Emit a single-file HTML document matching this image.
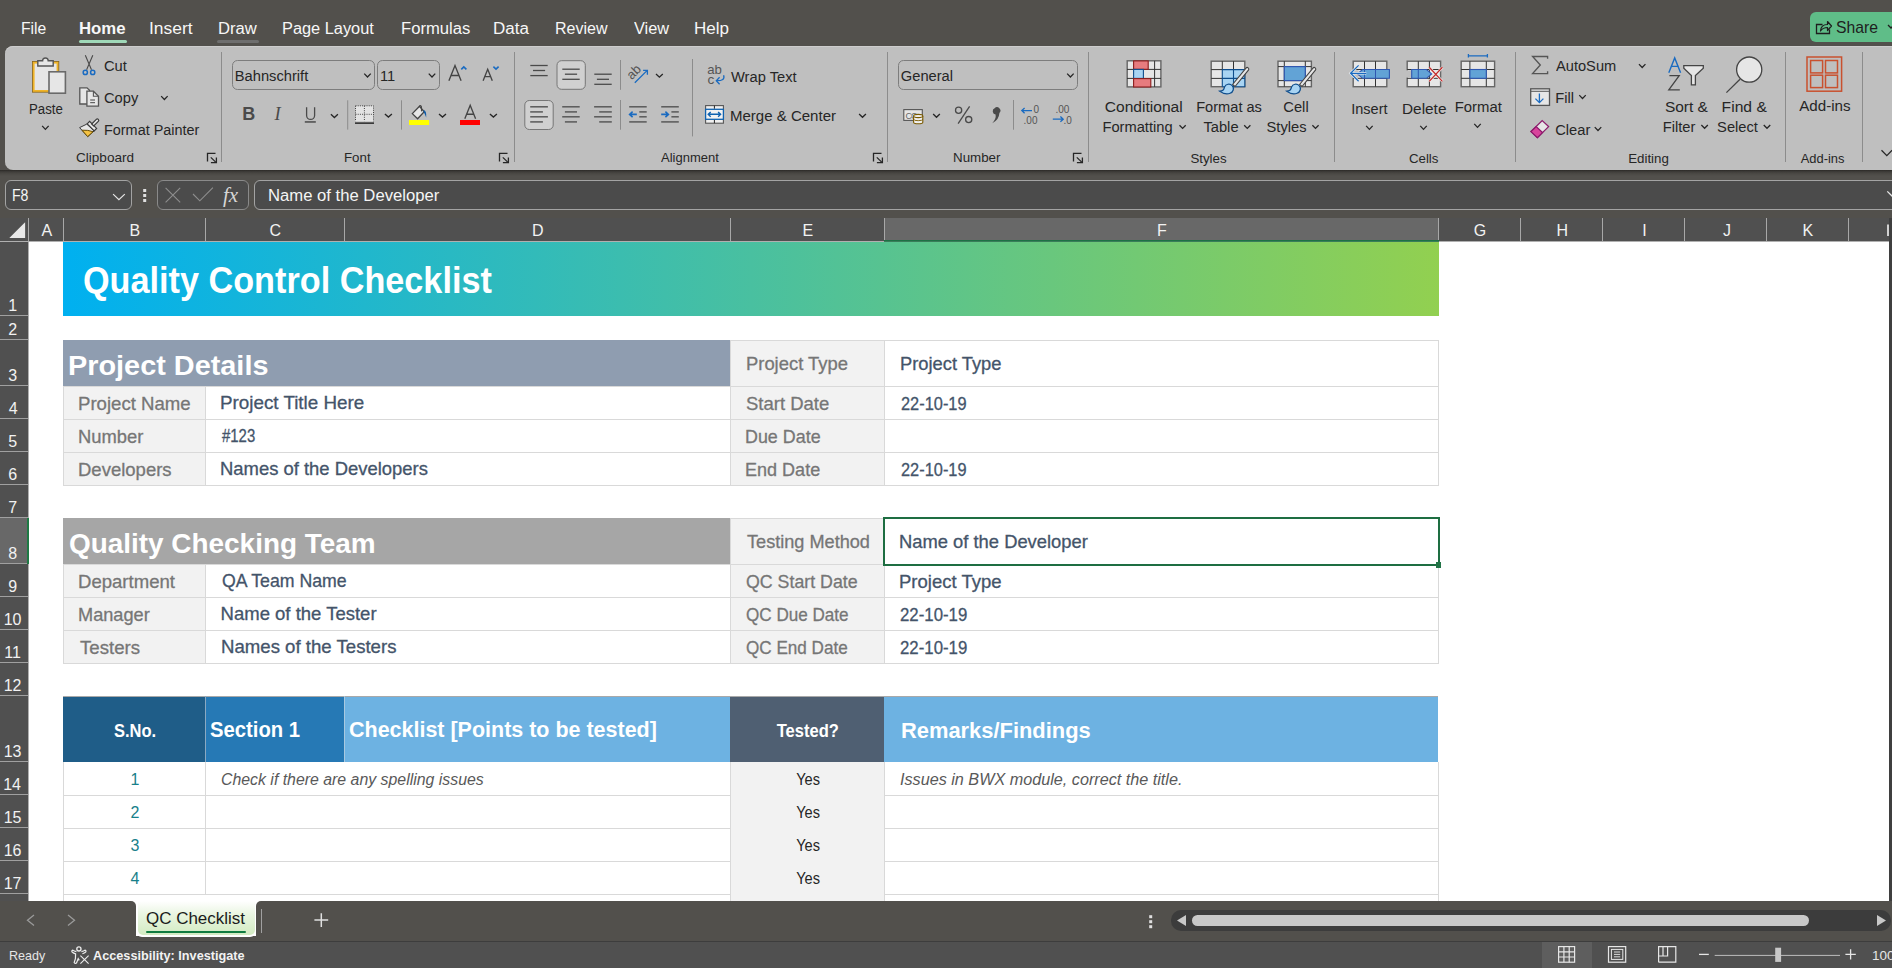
<!DOCTYPE html><html><head><meta charset="utf-8"><style>
html,body{margin:0;padding:0}
body{width:1892px;height:968px;position:relative;overflow:hidden;background:#52504c;font-family:'Liberation Sans',sans-serif}
</style></head><body>
<div style="position:absolute;left:0px;top:0px;width:1892px;height:46px;background:#52504c;"></div>
<div style="position:absolute;left:79px;top:40px;width:48px;height:3px;background:#9fd8b8;border-radius:2px;"></div>
<div style="position:absolute;left:217px;top:40px;width:42px;height:3px;background:#6e6e6e;border-radius:2px;"></div>
<div style="position:absolute;left:1810px;top:12px;width:100px;height:30px;background:#5fbd88;border-radius:6px;"></div>
<div style="position:absolute;left:5px;top:46px;width:1900px;height:124px;background:#bfbfbf;border-radius:8px;box-shadow:inset 0 1px 0 #cdcdcd;"></div>
<div style="position:absolute;left:221px;top:52px;width:1px;height:110px;background:#8c8c8c;"></div>
<div style="position:absolute;left:513.5px;top:52px;width:1px;height:110px;background:#8c8c8c;"></div>
<div style="position:absolute;left:886.5px;top:52px;width:1px;height:110px;background:#8c8c8c;"></div>
<div style="position:absolute;left:1087.5px;top:52px;width:1px;height:110px;background:#8c8c8c;"></div>
<div style="position:absolute;left:1333.5px;top:52px;width:1px;height:110px;background:#8c8c8c;"></div>
<div style="position:absolute;left:1514.5px;top:52px;width:1px;height:110px;background:#8c8c8c;"></div>
<div style="position:absolute;left:1784.5px;top:52px;width:1px;height:110px;background:#8c8c8c;"></div>
<div style="position:absolute;left:1862px;top:52px;width:1px;height:110px;background:#8c8c8c;"></div>
<div style="position:absolute;left:0px;top:170px;width:1892px;height:48px;background:#52504c;"></div>
<div style="position:absolute;left:0px;top:170px;width:1892px;height:6px;background:linear-gradient(180deg,#2b2926 0%,#3f3d3a 30%,#4a4844 60%,#52504c 100%);"></div>
<div style="position:absolute;left:5px;top:180px;width:125px;height:28px;border:1px solid #a3a3a3;border-radius:6px;background:#4b4b4b"></div>
<div style="position:absolute;left:157px;top:180px;width:90px;height:28px;border:1px solid #8a8a8a;border-radius:6px;background:#4b4b4b"></div>
<div style="position:absolute;left:254px;top:180px;width:1700px;height:28px;border:1px solid #a3a3a3;border-radius:6px;background:#4b4b4b"></div>
<div style="position:absolute;left:0px;top:218px;width:1892px;height:23px;background:#505050;"></div>
<div style="position:absolute;left:0px;top:241px;width:28px;height:660px;background:#505050;"></div>
<div style="position:absolute;left:884px;top:218px;width:554px;height:23px;background:#686868;"></div>
<div style="position:absolute;left:28px;top:218px;width:1px;height:23px;background:#a8a8a8;"></div>
<div style="position:absolute;left:63px;top:218px;width:1px;height:23px;background:#a8a8a8;"></div>
<div style="position:absolute;left:205px;top:218px;width:1px;height:23px;background:#a8a8a8;"></div>
<div style="position:absolute;left:344px;top:218px;width:1px;height:23px;background:#a8a8a8;"></div>
<div style="position:absolute;left:730px;top:218px;width:1px;height:23px;background:#a8a8a8;"></div>
<div style="position:absolute;left:884px;top:218px;width:1px;height:23px;background:#a8a8a8;"></div>
<div style="position:absolute;left:1438px;top:218px;width:1px;height:23px;background:#a8a8a8;"></div>
<div style="position:absolute;left:1520px;top:218px;width:1px;height:23px;background:#a8a8a8;"></div>
<div style="position:absolute;left:1602px;top:218px;width:1px;height:23px;background:#a8a8a8;"></div>
<div style="position:absolute;left:1684px;top:218px;width:1px;height:23px;background:#a8a8a8;"></div>
<div style="position:absolute;left:1766px;top:218px;width:1px;height:23px;background:#a8a8a8;"></div>
<div style="position:absolute;left:1848px;top:218px;width:1px;height:23px;background:#a8a8a8;"></div>
<div style="position:absolute;left:0px;top:241px;width:1889px;height:1px;background:#b0b0b0;"></div>
<div style="position:absolute;left:0px;top:518px;width:28px;height:46px;background:#686868;"></div>
<div style="position:absolute;left:0px;top:315px;width:28px;height:1px;background:#a0a0a0;"></div>
<div style="position:absolute;left:0px;top:339px;width:28px;height:1px;background:#a0a0a0;"></div>
<div style="position:absolute;left:0px;top:385px;width:28px;height:1px;background:#a0a0a0;"></div>
<div style="position:absolute;left:0px;top:418px;width:28px;height:1px;background:#a0a0a0;"></div>
<div style="position:absolute;left:0px;top:451px;width:28px;height:1px;background:#a0a0a0;"></div>
<div style="position:absolute;left:0px;top:484px;width:28px;height:1px;background:#a0a0a0;"></div>
<div style="position:absolute;left:0px;top:517px;width:28px;height:1px;background:#a0a0a0;"></div>
<div style="position:absolute;left:0px;top:563px;width:28px;height:1px;background:#a0a0a0;"></div>
<div style="position:absolute;left:0px;top:596px;width:28px;height:1px;background:#a0a0a0;"></div>
<div style="position:absolute;left:0px;top:629px;width:28px;height:1px;background:#a0a0a0;"></div>
<div style="position:absolute;left:0px;top:662px;width:28px;height:1px;background:#a0a0a0;"></div>
<div style="position:absolute;left:0px;top:695px;width:28px;height:1px;background:#a0a0a0;"></div>
<div style="position:absolute;left:0px;top:761px;width:28px;height:1px;background:#a0a0a0;"></div>
<div style="position:absolute;left:0px;top:794px;width:28px;height:1px;background:#a0a0a0;"></div>
<div style="position:absolute;left:0px;top:827px;width:28px;height:1px;background:#a0a0a0;"></div>
<div style="position:absolute;left:0px;top:860px;width:28px;height:1px;background:#a0a0a0;"></div>
<div style="position:absolute;left:0px;top:893px;width:28px;height:1px;background:#a0a0a0;"></div>
<div style="position:absolute;left:28px;top:242px;width:1px;height:659px;background:#b0b0b0;"></div>
<div style="position:absolute;left:27px;top:518px;width:2px;height:46px;background:#1f7a45;"></div>
<div style="position:absolute;left:29px;top:242px;width:1860px;height:659px;background:#ffffff;"></div>
<div style="position:absolute;left:1889px;top:218px;width:3px;height:683px;background:#3f3f3f;"></div>
<div style="position:absolute;left:63px;top:242px;width:1376px;height:74px;background:linear-gradient(90deg,#00b0f0 0%,#92d050 100%);"></div>
<div style="position:absolute;left:63px;top:340px;width:667px;height:46px;background:#8f9db0;"></div>
<div style="position:absolute;left:730px;top:340px;width:154px;height:46px;background:#f2f2f2;"></div>
<div style="position:absolute;left:63px;top:386px;width:142px;height:33px;background:#f2f2f2;"></div>
<div style="position:absolute;left:730px;top:386px;width:154px;height:33px;background:#f2f2f2;"></div>
<div style="position:absolute;left:63px;top:419px;width:142px;height:33px;background:#f2f2f2;"></div>
<div style="position:absolute;left:730px;top:419px;width:154px;height:33px;background:#f2f2f2;"></div>
<div style="position:absolute;left:63px;top:452px;width:142px;height:33px;background:#f2f2f2;"></div>
<div style="position:absolute;left:730px;top:452px;width:154px;height:33px;background:#f2f2f2;"></div>
<div style="position:absolute;left:730px;top:340px;width:708px;height:1px;background:#d9d9d9;"></div>
<div style="position:absolute;left:63px;top:386px;width:1375px;height:1px;background:#d9d9d9;"></div>
<div style="position:absolute;left:63px;top:419px;width:1375px;height:1px;background:#d9d9d9;"></div>
<div style="position:absolute;left:63px;top:452px;width:1375px;height:1px;background:#d9d9d9;"></div>
<div style="position:absolute;left:63px;top:485px;width:1375px;height:1px;background:#d9d9d9;"></div>
<div style="position:absolute;left:63px;top:386px;width:1375px;height:1px;background:#d9d9d9;"></div>
<div style="position:absolute;left:63px;top:386px;width:1px;height:99px;background:#d9d9d9;"></div>
<div style="position:absolute;left:205px;top:386px;width:1px;height:99px;background:#d9d9d9;"></div>
<div style="position:absolute;left:730px;top:340px;width:1px;height:145px;background:#d9d9d9;"></div>
<div style="position:absolute;left:884px;top:340px;width:1px;height:145px;background:#d9d9d9;"></div>
<div style="position:absolute;left:1438px;top:340px;width:1px;height:146px;background:#d9d9d9;"></div>
<div style="position:absolute;left:63px;top:518px;width:667px;height:46px;background:#a6a6a6;"></div>
<div style="position:absolute;left:730px;top:518px;width:154px;height:46px;background:#f2f2f2;"></div>
<div style="position:absolute;left:63px;top:564px;width:142px;height:33px;background:#f2f2f2;"></div>
<div style="position:absolute;left:730px;top:564px;width:154px;height:33px;background:#f2f2f2;"></div>
<div style="position:absolute;left:63px;top:597px;width:142px;height:33px;background:#f2f2f2;"></div>
<div style="position:absolute;left:730px;top:597px;width:154px;height:33px;background:#f2f2f2;"></div>
<div style="position:absolute;left:63px;top:630px;width:142px;height:33px;background:#f2f2f2;"></div>
<div style="position:absolute;left:730px;top:630px;width:154px;height:33px;background:#f2f2f2;"></div>
<div style="position:absolute;left:730px;top:518px;width:708px;height:1px;background:#d9d9d9;"></div>
<div style="position:absolute;left:63px;top:564px;width:1375px;height:1px;background:#d9d9d9;"></div>
<div style="position:absolute;left:63px;top:597px;width:1375px;height:1px;background:#d9d9d9;"></div>
<div style="position:absolute;left:63px;top:630px;width:1375px;height:1px;background:#d9d9d9;"></div>
<div style="position:absolute;left:63px;top:663px;width:1375px;height:1px;background:#d9d9d9;"></div>
<div style="position:absolute;left:63px;top:564px;width:1375px;height:1px;background:#d9d9d9;"></div>
<div style="position:absolute;left:63px;top:564px;width:1px;height:99px;background:#d9d9d9;"></div>
<div style="position:absolute;left:205px;top:564px;width:1px;height:99px;background:#d9d9d9;"></div>
<div style="position:absolute;left:730px;top:518px;width:1px;height:145px;background:#d9d9d9;"></div>
<div style="position:absolute;left:884px;top:518px;width:1px;height:145px;background:#d9d9d9;"></div>
<div style="position:absolute;left:1438px;top:518px;width:1px;height:146px;background:#d9d9d9;"></div>
<div style="position:absolute;left:883px;top:517px;width:553px;height:45px;border:2px solid #1e6e42"></div>
<div style="position:absolute;left:1435.5px;top:562px;width:5.5px;height:5.5px;background:#217346;"></div>
<div style="position:absolute;left:63px;top:696px;width:142px;height:66px;background:#1f5d88;"></div>
<div style="position:absolute;left:205px;top:696px;width:139px;height:66px;background:#2679b5;"></div>
<div style="position:absolute;left:344px;top:696px;width:386px;height:66px;background:#6db2e2;"></div>
<div style="position:absolute;left:730px;top:696px;width:154px;height:66px;background:#4f5f72;"></div>
<div style="position:absolute;left:884px;top:696px;width:554px;height:66px;background:#6db2e2;"></div>
<div style="position:absolute;left:63px;top:696px;width:1375px;height:1px;background:#a9a9a9;"></div>
<div style="position:absolute;left:344px;top:696px;width:1px;height:66px;background:#a8c9e0;"></div>
<div style="position:absolute;left:205px;top:696px;width:1px;height:66px;background:#8aa9c2;"></div>
<div style="position:absolute;left:730px;top:762px;width:154px;height:33px;background:#f2f2f2;"></div>
<div style="position:absolute;left:63px;top:795px;width:1375px;height:1px;background:#d9d9d9;"></div>
<div style="position:absolute;left:730px;top:795px;width:154px;height:33px;background:#f2f2f2;"></div>
<div style="position:absolute;left:63px;top:828px;width:1375px;height:1px;background:#d9d9d9;"></div>
<div style="position:absolute;left:730px;top:828px;width:154px;height:33px;background:#f2f2f2;"></div>
<div style="position:absolute;left:63px;top:861px;width:1375px;height:1px;background:#d9d9d9;"></div>
<div style="position:absolute;left:730px;top:861px;width:154px;height:33px;background:#f2f2f2;"></div>
<div style="position:absolute;left:63px;top:894px;width:1375px;height:1px;background:#d9d9d9;"></div>
<div style="position:absolute;left:730px;top:894px;width:154px;height:33px;background:#f2f2f2;"></div>
<div style="position:absolute;left:63px;top:927px;width:1375px;height:1px;background:#d9d9d9;"></div>
<div style="position:absolute;left:63px;top:762px;width:1px;height:139px;background:#d9d9d9;"></div>
<div style="position:absolute;left:205px;top:762px;width:1px;height:139px;background:#d9d9d9;"></div>
<div style="position:absolute;left:730px;top:762px;width:1px;height:139px;background:#d9d9d9;"></div>
<div style="position:absolute;left:884px;top:762px;width:1px;height:139px;background:#d9d9d9;"></div>
<div style="position:absolute;left:1438px;top:762px;width:1px;height:139px;background:#d9d9d9;"></div>
<div style="position:absolute;left:0px;top:901px;width:1892px;height:40px;background:#ffffff;"></div>
<div style="position:absolute;left:0px;top:901px;width:136px;height:40px;background:#52504c;border-radius:0 5px 0 0;"></div>
<div style="position:absolute;left:256px;top:901px;width:1636px;height:40px;background:#52504c;border-radius:5px 0 0 0;"></div>
<div style="position:absolute;left:136px;top:936px;width:120px;height:5px;background:#52504c;"></div>
<div style="position:absolute;left:136px;top:895px;width:120px;height:42px;background:#ffffff;border-radius:0 0 6px 6px;"></div>
<div style="position:absolute;left:137.5px;top:901px;width:117px;height:34.3px;background:linear-gradient(180deg,#ffffff 0%,#e9f5e1 40%,#d3ebc2 100%);border-radius:0 0 5px 5px;"></div>
<div style="position:absolute;left:146px;top:931px;width:100px;height:2px;background:#107c41;border-radius:1px;"></div>
<div style="position:absolute;left:261px;top:909px;width:1px;height:24px;background:#a0a0a0;"></div>
<div style="position:absolute;left:0px;top:941px;width:1892px;height:27px;background:#505050;"></div>
<div style="position:absolute;left:0px;top:941px;width:1892px;height:1px;background:#3d3d3d;"></div>
<div style="position:absolute;left:1542px;top:942px;width:50px;height:26px;background:#5e5e5e;"></div>
<div style="position:absolute;left:1171px;top:910px;width:720px;height:21px;background:#3c3c3c;border-radius:10px;"></div>
<div style="position:absolute;left:1192px;top:915px;width:617px;height:11px;background:#c8c8c8;border-radius:6px;"></div>
<svg style="position:absolute;left:0;top:0" width="1892" height="968" viewBox="0 0 1892 968"><rect x="33.6" y="62.6" width="24" height="28.4" fill="#e6e6e6" stroke="#f0b429" stroke-width="2"/>
<rect x="32.4" y="61.4" width="26.4" height="30.8" fill="none" stroke="#8a6414" stroke-width="0.8"/>
<path d="M37.8 66 V60.8 H42.6 A2.8 2.8 0 0 1 48.2 60.8 H53.2 V66 Z" fill="#e6e6e6" stroke="#555" stroke-width="1.4"/>
<rect x="49" y="71.8" width="16.4" height="21.4" fill="#e6e6e6" stroke="#6a6a6a" stroke-width="1.6"/>
<path d="M42.15 125.85 L45.4 129.35 L48.65 125.85" fill="none" stroke="#262626" stroke-width="1.3"/>
<path d="M85.3 55.3 L91.5 69.8 M92.8 55.3 L86.6 69.8" stroke="#4a4a4a" stroke-width="1.1" fill="none"/>
<circle cx="85.3" cy="72.4" r="2.1" fill="none" stroke="#1a6bc1" stroke-width="1.5"/>
<circle cx="92.7" cy="72.4" r="2.1" fill="none" stroke="#1a6bc1" stroke-width="1.5"/>
<path d="M79.8 87.8 H87 L89.5 90.3 V104 H79.8 Z" fill="#e6e6e6" stroke="#555" stroke-width="1.3"/>
<path d="M86.9 91.2 H93.4 L98.5 96.3 V106.2 H86.9 Z" fill="#e6e6e6" stroke="#555" stroke-width="1.3"/>
<path d="M93.4 91.2 V96.3 H98.5" fill="none" stroke="#555" stroke-width="1.1"/>
<path d="M90.2 100 H95 M90.2 102.7 H95" stroke="#333" stroke-width="0.9"/>
<path d="M86.8 124.1 L79.6 127.6 L87.7 136.6 L94.2 130.9 Z" fill="#e6e6e6" stroke="#3a3a3a" stroke-width="1"/>
<path d="M82 130.2 L87.7 136.6 L93 131.7 Q88 129.8 82 130.2 Z" fill="#f5c242" stroke="#6b4e00" stroke-width="1"/>
<path d="M87.2 123.8 L89.6 121.4 L96.6 128.4 L94.2 130.8 Z" fill="#e6e6e6" stroke="#3a3a3a" stroke-width="1.2"/>
<path d="M91.7 124 L96.3 119.4 A1.4 1.4 0 0 1 98.3 121.4 L93.7 126 Z" fill="#e6e6e6" stroke="#3a3a3a" stroke-width="1.2"/>
<rect x="232.5" y="60.5" width="142" height="29" rx="5" fill="none" stroke="#7d7d7d" stroke-width="1"/>
<path d="M364.25 73.6 L367.5 77.0 L370.75 73.6" fill="none" stroke="#262626" stroke-width="1.3"/>
<rect x="377.5" y="60.5" width="62" height="29" rx="5" fill="none" stroke="#7d7d7d" stroke-width="1"/>
<path d="M428.75 73.6 L432 77.0 L435.25 73.6" fill="none" stroke="#262626" stroke-width="1.3"/>
<path d="M448.9 80.8 L455 65.6 L461.1 80.8 M450.9 75.5 H459" fill="none" stroke="#444444" stroke-width="1.35"/>
<path d="M461.3 69.4 L463.8 66.9 L466.4 69.4" fill="none" stroke="#1a6bc1" stroke-width="1.6"/>
<path d="M483.1 80.8 L487.7 69.3 L492.3 80.8 M484.6 76.6 H490.8" fill="none" stroke="#444444" stroke-width="1.35"/>
<path d="M493.4 66.7 L496 69.2 L498.6 66.7" fill="none" stroke="#1a6bc1" stroke-width="1.6"/>
<text x="242.3" y="120.2" font-family="Liberation Sans" font-weight="700" font-size="18" fill="#4a4a4a">B</text>
<text x="274.5" y="120.2" font-family="Liberation Serif" font-style="italic" font-size="18.5" fill="#4a4a4a">I</text>
<path d="M306.6 107.3 V115.4 A4 4 0 0 0 314.6 115.4 V107.3" fill="none" stroke="#4a4a4a" stroke-width="1.3"/>
<rect x="304.8" y="121.2" width="11" height="1.5" fill="#4a4a4a"/>
<path d="M330.9 114.25 L334.4 117.55000000000001 L337.9 114.25" fill="none" stroke="#262626" stroke-width="1.3"/>
<rect x="347.2" y="100.3" width="1" height="29.3" fill="#8c8c8c"/>
<rect x="355.5" y="105.8" width="18" height="15.5" fill="#e3e3e3"/>
<path d="M355.5 105.8 H373.5 V121.3 M355.5 105.8 V121.3 M364.4 105.8 V121.3 M355.5 114.3 H373.5" fill="none" stroke="#333" stroke-width="0.9" stroke-dasharray="1 1.2"/>
<rect x="355" y="122.3" width="19" height="1.7" fill="#3a3a3a"/>
<path d="M384.9 113.9 L388.4 117.1 L391.9 113.9" fill="none" stroke="#262626" stroke-width="1.3"/>
<rect x="401" y="100.3" width="1" height="29.3" fill="#8c8c8c"/>
<path d="M412.3 113.6 L419.5 106.3 L424.2 111.7 L417.6 118.8 Z" fill="#e6e6e6" stroke="#444444" stroke-width="1.3"/>
<path d="M419.3 106.6 Q420.2 104.5 421.3 106.5 L421.6 111.4" fill="none" stroke="#444444" stroke-width="1.2"/>
<path d="M423.6 110 Q426.8 110.6 426.2 117.6 Q424.8 113.5 423.6 112 Z" fill="#0e5ba8"/>
<rect x="409" y="120" width="20.1" height="5" fill="#ffff00"/>
<path d="M439.0 113.9 L442.5 117.1 L446.0 113.9" fill="none" stroke="#262626" stroke-width="1.3"/>
<path d="M464.8 118.7 L470.2 105.3 L475.6 118.7 M466.7 114.2 H473.7" fill="none" stroke="#444444" stroke-width="1.35"/>
<rect x="460" y="120" width="20" height="5" fill="#ff0000"/>
<path d="M489.9 113.9 L493.4 117.1 L496.9 113.9" fill="none" stroke="#262626" stroke-width="1.3"/>
<path d="M207.5 161.4 V153.4 H215.5" fill="none" stroke="#262626" stroke-width="1.3"/>
<path d="M210.8 157.4 L216.0 162.4" fill="none" stroke="#262626" stroke-width="1.3"/>
<path d="M216.4 157.4 V162.6 H210.9" fill="none" stroke="#262626" stroke-width="1.3"/>
<path d="M499.5 161.4 V153.4 H507.5" fill="none" stroke="#262626" stroke-width="1.3"/>
<path d="M502.8 157.4 L508.0 162.4" fill="none" stroke="#262626" stroke-width="1.3"/>
<path d="M508.4 157.4 V162.6 H502.9" fill="none" stroke="#262626" stroke-width="1.3"/>
<path d="M873.5 161.4 V153.4 H881.5" fill="none" stroke="#262626" stroke-width="1.3"/>
<path d="M876.8 157.4 L882.0 162.4" fill="none" stroke="#262626" stroke-width="1.3"/>
<path d="M882.4 157.4 V162.6 H876.9" fill="none" stroke="#262626" stroke-width="1.3"/>
<path d="M1073.5 161.4 V153.4 H1081.5" fill="none" stroke="#262626" stroke-width="1.3"/>
<path d="M1076.8 157.4 L1082.0 162.4" fill="none" stroke="#262626" stroke-width="1.3"/>
<path d="M1082.4 157.4 V162.6 H1076.9" fill="none" stroke="#262626" stroke-width="1.3"/>
<path d="M530.3 65.5 H547.7" stroke="#4a4a4a" stroke-width="1.3"/>
<path d="M530.3 75.6 H547.7" stroke="#4a4a4a" stroke-width="1.3"/>
<path d="M533 70.5 H545.1" stroke="#4a4a4a" stroke-width="1.3"/>
<rect x="557" y="60.7" width="28.3" height="28.6" rx="4.5" fill="#d0d0d0" stroke="#767676" stroke-width="1"/>
<path d="M562.3 69.2 H579.7" stroke="#4a4a4a" stroke-width="1.3"/>
<path d="M562.3 79.3 H579.7" stroke="#4a4a4a" stroke-width="1.3"/>
<path d="M564.9 74.2 H577.1" stroke="#4a4a4a" stroke-width="1.3"/>
<path d="M594.3 74.2 H611.7" stroke="#4a4a4a" stroke-width="1.3"/>
<path d="M594.3 84.3 H611.7" stroke="#4a4a4a" stroke-width="1.3"/>
<path d="M596.9 79.3 H609" stroke="#4a4a4a" stroke-width="1.3"/>
<rect x="620" y="60" width="1" height="29.8" fill="#8c8c8c"/>
<g transform="translate(634 72) rotate(-45)"><text x="-7.4" y="4.2" font-family="Liberation Sans" font-size="13" fill="#555">ab</text></g>
<path d="M634.8 82.8 L647 70.6 M643.1 70.4 H647.4 V74.7" fill="none" stroke="#1a6bc1" stroke-width="1.3"/>
<path d="M656.0 74.0 L659.4 77.19999999999999 L662.8 74.0" fill="none" stroke="#262626" stroke-width="1.3"/>
<text x="707.2" y="74.3" font-family="Liberation Sans" font-size="13.2" fill="#555">ab</text>
<text x="707.4" y="83.6" font-family="Liberation Sans" font-size="13.6" fill="#555">c</text>
<path d="M723.6 75.3 Q725.6 80.8 716.5 80.7 M719.6 77.2 L716.3 80.7 L719.6 84.2" fill="none" stroke="#1a6bc1" stroke-width="1.3"/>
<rect x="524.8" y="100.5" width="28.4" height="29" rx="4.5" fill="#d0d0d0" stroke="#767676" stroke-width="1"/>
<path d="M530.2 106.8 H547.9" stroke="#595959" stroke-width="1.5"/>
<path d="M530.2 116.8 H547.9" stroke="#595959" stroke-width="1.5"/>
<path d="M530.2 111.9 H542.9" stroke="#595959" stroke-width="1.5"/>
<path d="M530.2 121.9 H542.9" stroke="#595959" stroke-width="1.5"/>
<path d="M562.2 106.8 H579.7" stroke="#595959" stroke-width="1.5"/>
<path d="M562.2 116.8 H579.7" stroke="#595959" stroke-width="1.5"/>
<path d="M564.9 111.9 H577" stroke="#595959" stroke-width="1.5"/>
<path d="M564.9 121.9 H577" stroke="#595959" stroke-width="1.5"/>
<path d="M594.1 106.8 H611.8" stroke="#595959" stroke-width="1.5"/>
<path d="M594.1 116.8 H611.8" stroke="#595959" stroke-width="1.5"/>
<path d="M599.2 111.9 H611.8" stroke="#595959" stroke-width="1.5"/>
<path d="M599.2 121.9 H611.8" stroke="#595959" stroke-width="1.5"/>
<rect x="620" y="100" width="1" height="29.7" fill="#8c8c8c"/>
<path d="M629.2 106.8 H646.7" stroke="#595959" stroke-width="1.5"/>
<path d="M629.2 121.9 H646.7" stroke="#595959" stroke-width="1.5"/>
<path d="M639.3 111.9 H646.7" stroke="#595959" stroke-width="1.5"/>
<path d="M639.3 116.8 H646.7" stroke="#595959" stroke-width="1.5"/>
<path d="M636.8 114.4 H630 M632.6 111.6 L629.6 114.4 L632.6 117.2" fill="none" stroke="#1a6bc1" stroke-width="1.6"/>
<path d="M661.2 106.8 H678.8" stroke="#595959" stroke-width="1.5"/>
<path d="M661.2 121.9 H678.8" stroke="#595959" stroke-width="1.5"/>
<path d="M671.4 111.9 H678.8" stroke="#595959" stroke-width="1.5"/>
<path d="M671.4 116.8 H678.8" stroke="#595959" stroke-width="1.5"/>
<path d="M661.2 114.4 H668.2 M665.4 111.6 L668.4 114.4 L665.4 117.2" fill="none" stroke="#1a6bc1" stroke-width="1.6"/>
<rect x="692" y="59" width="1" height="77.4" fill="#8c8c8c"/>
<rect x="705.6" y="105.6" width="17.8" height="17.6" fill="#f0f0f0" stroke="#555" stroke-width="1.1"/>
<path d="M714.4 105.6 V108.8 M714.4 119.8 V123.2" stroke="#222" stroke-width="1"/>
<rect x="705.6" y="109.3" width="17.8" height="10" fill="#f2f2f2" stroke="#0f62b0" stroke-width="1.3"/>
<path d="M708.4 114.3 H720.4 M710.7 111.9 L708.2 114.3 L710.7 116.7 M718.1 111.9 L720.6 114.3 L718.1 116.7" fill="none" stroke="#0f62b0" stroke-width="1.4"/>
<path d="M859.1 113.94999999999999 L862.5 117.25 L865.9 113.94999999999999" fill="none" stroke="#262626" stroke-width="1.3"/>
<rect x="898.5" y="60.5" width="179" height="29" rx="5" fill="none" stroke="#7d7d7d" stroke-width="1"/>
<path d="M1067.15 73.6 L1070.4 77.0 L1073.65 73.6" fill="none" stroke="#262626" stroke-width="1.3"/>
<rect x="903.8" y="109.6" width="18.5" height="10.8" fill="#e6e6e6" stroke="#555" stroke-width="1.1"/>
<text x="905.5" y="118.5" font-family="Liberation Sans" font-size="9" fill="#666" letter-spacing="-1">CC</text>
<path d="M913.6 116 V122.2 A4.6 1.6 0 0 0 922.8 122.2 V116" fill="#f0f0f0" stroke="#7a5a00" stroke-width="1.1"/>
<ellipse cx="918.2" cy="116" rx="4.6" ry="1.6" fill="#f0f0f0" stroke="#7a5a00" stroke-width="1.1"/>
<path d="M913.6 119.1 A4.6 1.6 0 0 0 922.8 119.1" fill="none" stroke="#7a5a00" stroke-width="0.9"/>
<path d="M933.15 113.94999999999999 L936.5 117.25 L939.85 113.94999999999999" fill="none" stroke="#262626" stroke-width="1.3"/>
<circle cx="958.6" cy="110.3" r="3.1" fill="none" stroke="#4a4a4a" stroke-width="1.3"/>
<circle cx="968.7" cy="119.6" r="3.1" fill="none" stroke="#4a4a4a" stroke-width="1.3"/>
<path d="M969.6 106.3 L958.1 123.6" stroke="#4a4a4a" stroke-width="1.3"/>
<path d="M994.6 108.3 A3.2 3.2 0 1 1 999.4 113 Q999 120 992.2 123.2 Q996.4 118.6 995.6 114.4 A3.2 3.2 0 0 1 994.6 108.3 Z" fill="#4a4a4a"/>
<rect x="1013" y="100" width="1" height="29.7" fill="#8c8c8c"/>
<text x="1033.6" y="113" font-family="Liberation Sans" font-size="10" fill="#555">0</text>
<text x="1023.6" y="123.6" font-family="Liberation Sans" font-size="10" fill="#555">.00</text>
<path d="M1032 110.6 H1022 M1024.6 108 L1021.8 110.6 L1024.6 113.2" fill="none" stroke="#1a6bc1" stroke-width="1.3"/>
<text x="1055.4" y="113" font-family="Liberation Sans" font-size="10" fill="#555">.00</text>
<text x="1063.6" y="123.6" font-family="Liberation Sans" font-size="10" fill="#555">.0</text>
<path d="M1052.8 119.2 H1063 M1060.4 116.6 L1063.2 119.2 L1060.4 121.8" fill="none" stroke="#1a6bc1" stroke-width="1.3"/>
<rect x="1127.2" y="60.8" width="33.700000000000045" height="26.10000000000001" fill="#e6e6e6" stroke="#666" stroke-width="1.4"/>
<path d="M1127 69.4 H1161 M1127 78.4 H1161 M1154.6 60.8 V86.9" stroke="#333" stroke-width="1"/>
<rect x="1133.6" y="60.9" width="14.6" height="8.4" fill="#e77b7e" stroke="#8b1c1c" stroke-width="1.1"/>
<rect x="1133.6" y="69.4" width="9.8" height="9" fill="#a8d4f3" stroke="#0e4d8c" stroke-width="1.1"/>
<rect x="1133.6" y="78.6" width="17.2" height="8.4" fill="#e77b7e" stroke="#8b1c1c" stroke-width="1.1"/>
<rect x="1211.2" y="61.2" width="33.59999999999991" height="25.5" fill="#e6e6e6" stroke="#666" stroke-width="1.4"/>
<rect x="1222.3" y="69.6" width="22.5" height="17.1" fill="#a8d4f3"/>
<path d="M1222.3 61.2 V69.6 M1233.5 61.2 V69.6 M1211.2 69.6 H1222.3 M1211.2 78.4 H1222.3" stroke="#333" stroke-width="1"/>
<path d="M1222.3 86.7 V69.6 H1244.8 V86.7 H1222.3 M1233.5 69.6 V86.7 M1222.3 78.4 H1244.8" fill="none" stroke="#0e4d8c" stroke-width="1.1"/>
<path d="M1232.56 84.49 L1245.96 68.08999999999999 A1.6 1.6 0 0 1 1248.44 70.11 L1235.04 86.50999999999999 Z" fill="#e6e6e6" stroke="#444" stroke-width="1.1"/>
<path d="M1219.8 91.19999999999999 Q1223.8 91.1 1224.5 87.1 A4.6 4.6 0 1 1 1230.1 93.19999999999999 Q1225.3 95.1 1219.8 91.19999999999999 Z" fill="#a8d4f3" stroke="#0e4d8c" stroke-width="1.2"/>
<rect x="1278" y="61.2" width="33.40000000000009" height="25.5" fill="#e6e6e6" stroke="#666" stroke-width="1.4"/>
<path d="M1284.3 61.2 V86.7 M1305.3 61.2 V86.7 M1278 66.6 H1311.4 M1278 80.6 H1311.4" stroke="#333" stroke-width="1"/>
<rect x="1284.3" y="66.6" width="21" height="14" fill="#62a3d6" stroke="#2f57b0" stroke-width="1.2"/>
<path d="M1299.56 84.49 L1312.96 68.08999999999999 A1.6 1.6 0 0 1 1315.44 70.11 L1302.04 86.50999999999999 Z" fill="#e6e6e6" stroke="#444" stroke-width="1.1"/>
<path d="M1286.8 91.19999999999999 Q1290.8 91.1 1291.5 87.1 A4.6 4.6 0 1 1 1297.1 93.19999999999999 Q1292.3 95.1 1286.8 91.19999999999999 Z" fill="#a8d4f3" stroke="#0e4d8c" stroke-width="1.2"/>
<rect x="1353.2" y="61.2" width="33.59999999999991" height="25.5" fill="#e6e6e6" stroke="#666" stroke-width="1.4"/>
<path d="M1364.5 61.2 V86.7 M1375.5 61.2 V86.7 M1353.2 69.5 H1386.8 M1353.2 78.3 H1386.8 " stroke="#333" stroke-width="1"/>
<rect x="1351.6" y="70.3" width="7" height="7.3" fill="#bfbfbf"/>
<path d="M1357.5 73.9 L1362.5 69.5 H1389.4 V78.3 H1362.5 Z" fill="#62a3d6" stroke="#2f57b0" stroke-width="1.1"/>
<path d="M1364.5 69.5 V78.3 M1375.5 69.5 V78.3" stroke="#2f57b0" stroke-width="1"/>
<path d="M1366.3 73.3 H1350.8 M1358.6 65.4 L1350.6 73.3 L1358.6 81.2" fill="none" stroke="#f0f0f0" stroke-width="2.6"/>
<path d="M1366.3 73.3 H1350.8 M1358.6 65.4 L1350.6 73.3 L1358.6 81.2" fill="none" stroke="#1a6bc1" stroke-width="1.3"/>
<rect x="1407.2" y="61.2" width="33.399999999999864" height="25.5" fill="#e6e6e6" stroke="#666" stroke-width="1.4"/>
<path d="M1418.3 61.2 V86.7 M1429.4 61.2 V86.7 M1407.2 69.5 H1440.6 M1407.2 78.3 H1440.6 " stroke="#333" stroke-width="1"/>
<rect x="1406" y="70.3" width="6" height="7.3" fill="#bfbfbf"/>
<path d="M1411.7 69.5 H1426.5 L1431.6 73.9 L1426.5 78.3 H1411.7 Z" fill="#62a3d6" stroke="#2f57b0" stroke-width="1.1"/>
<path d="M1418.3 69.5 V78.3" stroke="#2f57b0" stroke-width="1"/>
<path d="M1429.2 67.3 L1442.4 81.4 M1442.4 67.3 L1429.2 81.4" stroke="#f0f0f0" stroke-width="2.6"/>
<path d="M1429.2 67.3 L1442.4 81.4 M1442.4 67.3 L1429.2 81.4" stroke="#c42b2b" stroke-width="1.3"/>
<rect x="1461.2" y="61.2" width="33.399999999999864" height="25.5" fill="#e6e6e6" stroke="#666" stroke-width="1.4"/>
<path d="M1469.9 61.2 V86.7 M1486.3 61.2 V86.7 M1461.2 69.5 H1494.6 M1461.2 78.3 H1494.6 " stroke="#333" stroke-width="1"/>
<rect x="1469.9" y="69.5" width="16.4" height="8.8" fill="#62a3d6" stroke="#2f57b0" stroke-width="1.1"/>
<path d="M1468.4 55.8 H1487.4 M1468.4 54 V57.6 M1487.4 54 V57.6" stroke="#1a6bc1" stroke-width="1.3"/>
<path d="M1366.15 125.85 L1369.4 129.35 L1372.65 125.85" fill="none" stroke="#262626" stroke-width="1.3"/>
<path d="M1420.25 125.85 L1423.5 129.35 L1426.75 125.85" fill="none" stroke="#262626" stroke-width="1.3"/>
<path d="M1474.25 123.85 L1477.5 127.35 L1480.75 123.85" fill="none" stroke="#262626" stroke-width="1.3"/>
<path d="M1547.6 58.8 V56.5 H1532.6 L1540.3 65 L1532.6 73.6 H1547.6 V71.3" fill="none" stroke="#555" stroke-width="1.35"/>
<path d="M1638.95 64.14999999999999 L1642.2 67.45 L1645.45 64.14999999999999" fill="none" stroke="#262626" stroke-width="1.3"/>
<rect x="1530.7" y="88.8" width="18.8" height="16.6" fill="#e6e6e6" stroke="#555" stroke-width="1.3"/>
<path d="M1530.7 91.3 H1549.5" stroke="#555" stroke-width="1"/>
<path d="M1539.4 93.4 V102.4 M1535.4 98.6 L1539.4 102.6 L1543.4 98.6" fill="none" stroke="#1a6bc1" stroke-width="1.3"/>
<path d="M1579.25 95.14999999999999 L1582.5 98.45 L1585.75 95.14999999999999" fill="none" stroke="#262626" stroke-width="1.3"/>
<path d="M1542.2 120.6 L1548.6 126.6 L1537.4 137.6 L1531 131.6 Z" fill="#e6e6e6" stroke="#8b1a6b" stroke-width="1.3"/>
<path d="M1536.2 126.6 L1542.5 132.6 L1537.4 137.6 L1531 131.6 Z" fill="#d9449c" stroke="#8b1a6b" stroke-width="1.3"/>
<path d="M1594.75 127.15 L1598 130.45000000000002 L1601.25 127.15" fill="none" stroke="#262626" stroke-width="1.3"/>
<path d="M1668.8 72.7 L1674.7 57.9 L1680.6 72.7 M1670.6 66.4 H1678.8" fill="none" stroke="#1a6bc1" stroke-width="1.4"/>
<path d="M1669.4 75.6 H1679.2 L1668.8 89.8 H1679.8" fill="none" stroke="#444" stroke-width="1.3"/>
<path d="M1683.8 65.6 H1703.3 V68.2 L1695.4 75.6 V84.8 H1691.4 V75.6 L1683.8 68.2 Z" fill="#e6e6e6" stroke="#444" stroke-width="1.3" stroke-linejoin="miter"/>
<circle cx="1749.2" cy="69.6" r="12.6" fill="#e6e6e6" stroke="#444" stroke-width="1.3"/>
<path d="M1740 79.2 L1726.4 92.6" stroke="#444" stroke-width="1.3"/>
<path d="M1701.35 124.94999999999999 L1704.6 128.25 L1707.85 124.94999999999999" fill="none" stroke="#262626" stroke-width="1.3"/>
<path d="M1763.75 124.94999999999999 L1767 128.25 L1770.25 124.94999999999999" fill="none" stroke="#262626" stroke-width="1.3"/>
<rect x="1807" y="57" width="34.6" height="34.2" fill="none" stroke="#c9512f" stroke-width="1.5"/>
<rect x="1810.6" y="60.5" width="12" height="12.4" fill="none" stroke="#c9512f" stroke-width="1.5"/>
<rect x="1825.5" y="60.5" width="12" height="12.4" fill="none" stroke="#c9512f" stroke-width="1.5"/>
<rect x="1810.6" y="75.2" width="12" height="12.4" fill="none" stroke="#c9512f" stroke-width="1.5"/>
<rect x="1825.5" y="75.2" width="12" height="12.4" fill="none" stroke="#c9512f" stroke-width="1.5"/>
<path d="M1881.5 150.3 L1886.8 155.6 L1892.1 150.3" fill="none" stroke="#262626" stroke-width="1.3"/>
<path d="M1822.5 24.5 H1816.5 V33.5 H1829.5 V29.5" fill="none" stroke="#1e1e1e" stroke-width="1.3"/>
<path d="M1820.5 31 Q1821 24.5 1827.5 24.5 V21.5 L1831.5 26 L1827.5 30.5 V27.5 Q1823 27.5 1820.5 31 Z" fill="none" stroke="#1e1e1e" stroke-width="1.2" stroke-linejoin="round"/>
<path d="M1888 25 L1891 28 L1894 25" fill="none" stroke="#1e1e1e" stroke-width="1.3"/>
<path d="M113.1 194.1 L118.9 199.7 L124.8 194.1" fill="none" stroke="#e6e6e6" stroke-width="1.2"/>
<rect x="143.2" y="189" width="3" height="3" fill="#e0e0e0"/>
<rect x="143.2" y="194" width="3" height="3" fill="#e0e0e0"/>
<rect x="143.2" y="199" width="3" height="3" fill="#e0e0e0"/>
<path d="M165.6 187.8 L180.2 202.4 M180.2 187.8 L165.6 202.4" stroke="#8e8e8e" stroke-width="1.1"/>
<path d="M193 194 L199.8 200.8 L212.9 187.7" fill="none" stroke="#8e8e8e" stroke-width="1.1"/>
<text x="223" y="201.5" font-family="Liberation Serif" font-style="italic" font-size="21" fill="#d6d6d6">fx</text>
<path d="M9.3 238 L25.1 222.2 V238 Z" fill="#e8e8e8"/>
<path d="M34 915 L27.5 920.2 L34 925.4" fill="none" stroke="#9a9a9a" stroke-width="1.3"/>
<path d="M68 915 L74.5 920.2 L68 925.4" fill="none" stroke="#9a9a9a" stroke-width="1.3"/>
<path d="M321.3 913.2 V927 M314.4 920.1 H328.2" stroke="#e0e0e0" stroke-width="1.5"/>
<rect x="1149.2" y="915.2" width="3" height="3" fill="#e0e0e0"/>
<rect x="1149.2" y="920.2" width="3" height="3" fill="#e0e0e0"/>
<rect x="1149.2" y="925.2" width="3" height="3" fill="#e0e0e0"/>
<path d="M1186 915 L1177 920.5 L1186 926 Z" fill="#c8c8c8"/>
<path d="M1877 915 L1886 920.5 L1877 926 Z" fill="#c8c8c8"/>
<circle cx="78.9" cy="948.9" r="2.1" fill="none" stroke="#ededed" stroke-width="1.3"/>
<path d="M76.4 951.7 Q74 951.4 72.8 950.2 Q71.2 950.6 72.1 952 Q73.6 953.3 75.6 953.9 L75.4 958.6 L74.2 962.4 Q75 964 76.5 963 L78.2 958.6 L79.2 960.4" fill="none" stroke="#ededed" stroke-width="1.2"/>
<path d="M81.4 951.7 Q83.8 951.4 85 950.2 Q86.6 950.6 85.7 952 Q84.4 953.1 82.4 953.8" fill="none" stroke="#ededed" stroke-width="1.2"/>
<path d="M80.4 955.6 L88.6 963.6 M88.6 955.6 L80.4 963.6" stroke="#ededed" stroke-width="1.1"/>
<rect x="1558.6" y="946.6" width="16" height="15.6" fill="none" stroke="#e6e6e6" stroke-width="1.2"/>
<path d="M1563.9 946.6 V962.2 M1569.2 946.6 V962.2 M1558.6 951.8 H1574.6 M1558.6 957 H1574.6" stroke="#e6e6e6" stroke-width="1.2"/>
<rect x="1608.5" y="946.6" width="17.2" height="15.6" fill="none" stroke="#e6e6e6" stroke-width="1.2"/>
<rect x="1611.4" y="949.4" width="11.4" height="10" fill="none" stroke="#e6e6e6" stroke-width="1"/>
<path d="M1614 952 H1620.2 M1614 954.4 H1620.2 M1614 956.8 H1620.2" stroke="#e6e6e6" stroke-width="0.9"/>
<path d="M1658.6 962.2 V946.6 H1675.8 V962.2 H1658.6 M1658.6 956 H1667.6 V946.6 M1663 946.6 V956" fill="none" stroke="#e6e6e6" stroke-width="1.2"/>
<path d="M1699 954.4 H1708.8" stroke="#e6e6e6" stroke-width="1.3"/>
<path d="M1714.7 955.4 H1840" stroke="#bdbdbd" stroke-width="1"/>
<rect x="1775.2" y="947.7" width="5.9" height="14.2" fill="#c8c8c8"/>
<path d="M1845.4 954.4 H1855.8 M1850.6 949.2 V959.6" stroke="#e6e6e6" stroke-width="1.3"/>
<path d="M161.15 96.14999999999999 L164.4 99.45 L167.65 96.14999999999999" fill="none" stroke="#262626" stroke-width="1.3"/>
<path d="M1179.5 125.2 L1182.6 128.4 L1185.6999999999998 125.2" fill="none" stroke="#262626" stroke-width="1.3"/>
<path d="M1244.2 125.2 L1247.3 128.4 L1250.3999999999999 125.2" fill="none" stroke="#262626" stroke-width="1.3"/>
<path d="M1312.4 125.2 L1315.5 128.4 L1318.6 125.2" fill="none" stroke="#262626" stroke-width="1.3"/>
<rect x="1887.2" y="224.5" width="1.6" height="11.5" fill="#f2f2f2"/>
<rect x="1889" y="218" width="3" height="683" fill="#3f3f3f"/>
<path d="M1887.3 191.4 L1892 196 L1896.7 191.4" fill="none" stroke="#e6e6e6" stroke-width="1.3"/>
<rect x="884" y="240" width="555" height="1.8" fill="#1d7145"/></svg>
<div style="position:absolute;top:21.16px;left:21.21px;font:normal 400 16px/16px 'Liberation Sans',sans-serif;color:#f7f7f7;letter-spacing:0px;"><span id="t0" style="display:inline-block;white-space:nowrap;transform:scaleX(0.9800);transform-origin:left 0;">File</span></div>
<div style="position:absolute;top:21.16px;left:78.98px;font:normal 700 16px/16px 'Liberation Sans',sans-serif;color:#f7f7f7;letter-spacing:0px;"><span id="t1" style="display:inline-block;white-space:nowrap;transform:scaleX(1.0455);transform-origin:left 0;">Home</span></div>
<div style="position:absolute;top:21.16px;left:148.91px;font:normal 400 16px/16px 'Liberation Sans',sans-serif;color:#f7f7f7;letter-spacing:0px;"><span id="t2" style="display:inline-block;white-space:nowrap;transform:scaleX(1.0897);transform-origin:left 0;">Insert</span></div>
<div style="position:absolute;top:21.16px;left:217.98px;font:normal 400 16px/16px 'Liberation Sans',sans-serif;color:#f7f7f7;letter-spacing:0px;"><span id="t3" style="display:inline-block;white-space:nowrap;transform:scaleX(1.0405);transform-origin:left 0;">Draw</span></div>
<div style="position:absolute;top:21.16px;left:282.19px;font:normal 400 16px/16px 'Liberation Sans',sans-serif;color:#f7f7f7;letter-spacing:0px;"><span id="t4" style="display:inline-block;white-space:nowrap;transform:scaleX(1.0222);transform-origin:left 0;">Page Layout</span></div>
<div style="position:absolute;top:21.16px;left:401.18px;font:normal 400 16px/16px 'Liberation Sans',sans-serif;color:#f7f7f7;letter-spacing:0px;"><span id="t5" style="display:inline-block;white-space:nowrap;transform:scaleX(1.0379);transform-origin:left 0;">Formulas</span></div>
<div style="position:absolute;top:21.16px;left:493.35px;font:normal 400 16px/16px 'Liberation Sans',sans-serif;color:#f7f7f7;letter-spacing:0px;"><span id="t6" style="display:inline-block;white-space:nowrap;transform:scaleX(1.0606);transform-origin:left 0;">Data</span></div>
<div style="position:absolute;top:21.16px;left:555.00px;font:normal 400 16px/16px 'Liberation Sans',sans-serif;color:#f7f7f7;letter-spacing:0px;"><span id="t7" style="display:inline-block;white-space:nowrap;">Review</span></div>
<div style="position:absolute;top:21.16px;left:634.40px;font:normal 400 16px/16px 'Liberation Sans',sans-serif;color:#f7f7f7;letter-spacing:0px;"><span id="t8" style="display:inline-block;white-space:nowrap;transform:scaleX(1.0229);transform-origin:left 0;">View</span></div>
<div style="position:absolute;top:21.16px;left:693.94px;font:normal 400 16px/16px 'Liberation Sans',sans-serif;color:#f7f7f7;letter-spacing:0px;"><span id="t9" style="display:inline-block;white-space:nowrap;transform:scaleX(1.0625);transform-origin:left 0;">Help</span></div>
<div style="position:absolute;top:19.31px;left:1836.23px;font:normal 400 17px/17px 'Liberation Sans',sans-serif;color:#1e1e1e;letter-spacing:0px;"><span id="t10" style="display:inline-block;white-space:nowrap;transform:scaleX(0.9267);transform-origin:left 0;">Share</span></div>
<div style="position:absolute;top:188.06px;left:12.12px;font:normal 400 16px/16px 'Liberation Sans',sans-serif;color:#f5f5f5;letter-spacing:0px;"><span id="t11" style="display:inline-block;white-space:nowrap;transform:scaleX(0.8824);transform-origin:left 0;">F8</span></div>
<div style="position:absolute;top:188.16px;left:267.75px;font:normal 400 16px/16px 'Liberation Sans',sans-serif;color:#f5f5f5;letter-spacing:0px;"><span id="t12" style="display:inline-block;white-space:nowrap;transform:scaleX(1.0411);transform-origin:left 0;">Name of the Developer</span></div>
<div style="position:absolute;top:223.26px;left:46.90px;width:0;display:flex;justify-content:center;font:normal 400 16px/16px 'Liberation Sans',sans-serif;color:#f2f2f2;letter-spacing:0px;"><span id="t13" style="display:inline-block;white-space:nowrap;">A</span></div>
<div style="position:absolute;top:223.26px;left:134.90px;width:0;display:flex;justify-content:center;font:normal 400 16px/16px 'Liberation Sans',sans-serif;color:#f2f2f2;letter-spacing:0px;"><span id="t14" style="display:inline-block;white-space:nowrap;">B</span></div>
<div style="position:absolute;top:223.26px;left:275.40px;width:0;display:flex;justify-content:center;font:normal 400 16px/16px 'Liberation Sans',sans-serif;color:#f2f2f2;letter-spacing:0px;"><span id="t15" style="display:inline-block;white-space:nowrap;">C</span></div>
<div style="position:absolute;top:223.26px;left:537.90px;width:0;display:flex;justify-content:center;font:normal 400 16px/16px 'Liberation Sans',sans-serif;color:#f2f2f2;letter-spacing:0px;"><span id="t16" style="display:inline-block;white-space:nowrap;">D</span></div>
<div style="position:absolute;top:223.26px;left:807.90px;width:0;display:flex;justify-content:center;font:normal 400 16px/16px 'Liberation Sans',sans-serif;color:#f2f2f2;letter-spacing:0px;"><span id="t17" style="display:inline-block;white-space:nowrap;">E</span></div>
<div style="position:absolute;top:223.26px;left:1161.90px;width:0;display:flex;justify-content:center;font:normal 400 16px/16px 'Liberation Sans',sans-serif;color:#f2f2f2;letter-spacing:0px;"><span id="t18" style="display:inline-block;white-space:nowrap;">F</span></div>
<div style="position:absolute;top:223.26px;left:1479.90px;width:0;display:flex;justify-content:center;font:normal 400 16px/16px 'Liberation Sans',sans-serif;color:#f2f2f2;letter-spacing:0px;"><span id="t19" style="display:inline-block;white-space:nowrap;">G</span></div>
<div style="position:absolute;top:223.26px;left:1562.40px;width:0;display:flex;justify-content:center;font:normal 400 16px/16px 'Liberation Sans',sans-serif;color:#f2f2f2;letter-spacing:0px;"><span id="t20" style="display:inline-block;white-space:nowrap;">H</span></div>
<div style="position:absolute;top:223.26px;left:1644.40px;width:0;display:flex;justify-content:center;font:normal 400 16px/16px 'Liberation Sans',sans-serif;color:#f2f2f2;letter-spacing:0px;"><span id="t21" style="display:inline-block;white-space:nowrap;">I</span></div>
<div style="position:absolute;top:223.26px;left:1726.90px;width:0;display:flex;justify-content:center;font:normal 400 16px/16px 'Liberation Sans',sans-serif;color:#f2f2f2;letter-spacing:0px;"><span id="t22" style="display:inline-block;white-space:nowrap;">J</span></div>
<div style="position:absolute;top:223.26px;left:1807.90px;width:0;display:flex;justify-content:center;font:normal 400 16px/16px 'Liberation Sans',sans-serif;color:#f2f2f2;letter-spacing:0px;"><span id="t23" style="display:inline-block;white-space:nowrap;">K</span></div>
<div style="position:absolute;top:298.26px;left:12.60px;width:0;display:flex;justify-content:center;font:normal 400 16px/16px 'Liberation Sans',sans-serif;color:#f2f2f2;letter-spacing:0px;"><span id="t24" style="display:inline-block;white-space:nowrap;">1</span></div>
<div style="position:absolute;top:322.26px;left:12.60px;width:0;display:flex;justify-content:center;font:normal 400 16px/16px 'Liberation Sans',sans-serif;color:#f2f2f2;letter-spacing:0px;"><span id="t25" style="display:inline-block;white-space:nowrap;">2</span></div>
<div style="position:absolute;top:368.26px;left:12.60px;width:0;display:flex;justify-content:center;font:normal 400 16px/16px 'Liberation Sans',sans-serif;color:#f2f2f2;letter-spacing:0px;"><span id="t26" style="display:inline-block;white-space:nowrap;">3</span></div>
<div style="position:absolute;top:401.26px;left:13.10px;width:0;display:flex;justify-content:center;font:normal 400 16px/16px 'Liberation Sans',sans-serif;color:#f2f2f2;letter-spacing:0px;"><span id="t27" style="display:inline-block;white-space:nowrap;">4</span></div>
<div style="position:absolute;top:434.26px;left:12.60px;width:0;display:flex;justify-content:center;font:normal 400 16px/16px 'Liberation Sans',sans-serif;color:#f2f2f2;letter-spacing:0px;"><span id="t28" style="display:inline-block;white-space:nowrap;">5</span></div>
<div style="position:absolute;top:467.26px;left:12.60px;width:0;display:flex;justify-content:center;font:normal 400 16px/16px 'Liberation Sans',sans-serif;color:#f2f2f2;letter-spacing:0px;"><span id="t29" style="display:inline-block;white-space:nowrap;">6</span></div>
<div style="position:absolute;top:500.26px;left:12.60px;width:0;display:flex;justify-content:center;font:normal 400 16px/16px 'Liberation Sans',sans-serif;color:#f2f2f2;letter-spacing:0px;"><span id="t30" style="display:inline-block;white-space:nowrap;">7</span></div>
<div style="position:absolute;top:546.26px;left:12.60px;width:0;display:flex;justify-content:center;font:normal 400 16px/16px 'Liberation Sans',sans-serif;color:#f2f2f2;letter-spacing:0px;"><span id="t31" style="display:inline-block;white-space:nowrap;">8</span></div>
<div style="position:absolute;top:579.26px;left:12.60px;width:0;display:flex;justify-content:center;font:normal 400 16px/16px 'Liberation Sans',sans-serif;color:#f2f2f2;letter-spacing:0px;"><span id="t32" style="display:inline-block;white-space:nowrap;">9</span></div>
<div style="position:absolute;top:612.26px;left:12.60px;width:0;display:flex;justify-content:center;font:normal 400 16px/16px 'Liberation Sans',sans-serif;color:#f2f2f2;letter-spacing:0px;"><span id="t33" style="display:inline-block;white-space:nowrap;">10</span></div>
<div style="position:absolute;top:645.26px;left:12.60px;width:0;display:flex;justify-content:center;font:normal 400 16px/16px 'Liberation Sans',sans-serif;color:#f2f2f2;letter-spacing:0px;"><span id="t34" style="display:inline-block;white-space:nowrap;">11</span></div>
<div style="position:absolute;top:678.26px;left:12.60px;width:0;display:flex;justify-content:center;font:normal 400 16px/16px 'Liberation Sans',sans-serif;color:#f2f2f2;letter-spacing:0px;"><span id="t35" style="display:inline-block;white-space:nowrap;">12</span></div>
<div style="position:absolute;top:744.26px;left:12.60px;width:0;display:flex;justify-content:center;font:normal 400 16px/16px 'Liberation Sans',sans-serif;color:#f2f2f2;letter-spacing:0px;"><span id="t36" style="display:inline-block;white-space:nowrap;">13</span></div>
<div style="position:absolute;top:777.26px;left:12.10px;width:0;display:flex;justify-content:center;font:normal 400 16px/16px 'Liberation Sans',sans-serif;color:#f2f2f2;letter-spacing:0px;"><span id="t37" style="display:inline-block;white-space:nowrap;">14</span></div>
<div style="position:absolute;top:810.26px;left:12.60px;width:0;display:flex;justify-content:center;font:normal 400 16px/16px 'Liberation Sans',sans-serif;color:#f2f2f2;letter-spacing:0px;"><span id="t38" style="display:inline-block;white-space:nowrap;">15</span></div>
<div style="position:absolute;top:843.26px;left:12.60px;width:0;display:flex;justify-content:center;font:normal 400 16px/16px 'Liberation Sans',sans-serif;color:#f2f2f2;letter-spacing:0px;"><span id="t39" style="display:inline-block;white-space:nowrap;">16</span></div>
<div style="position:absolute;top:876.26px;left:12.60px;width:0;display:flex;justify-content:center;font:normal 400 16px/16px 'Liberation Sans',sans-serif;color:#f2f2f2;letter-spacing:0px;"><span id="t40" style="display:inline-block;white-space:nowrap;">17</span></div>
<div style="position:absolute;top:262.63px;left:82.66px;font:normal 700 36px/36px 'Liberation Sans',sans-serif;color:#ffffff;letter-spacing:0px;"><span id="t41" style="display:inline-block;white-space:nowrap;transform:scaleX(0.9506);transform-origin:left 0;">Quality Control Checklist</span></div>
<div style="position:absolute;top:352.94px;left:68.28px;font:normal 700 27px/27px 'Liberation Sans',sans-serif;color:#ffffff;letter-spacing:0px;"><span id="t42" style="display:inline-block;white-space:nowrap;transform:scaleX(1.0686);transform-origin:left 0;">Project Details</span></div>
<div style="position:absolute;top:395.14px;left:77.99px;font:normal 400 18.5px/18.5px 'Liberation Sans',sans-serif;color:#767676;letter-spacing:0px;-webkit-text-stroke:0.3px #767676;"><span id="t43" style="display:inline-block;white-space:nowrap;transform:scaleX(1.0045);transform-origin:left 0;">Project Name</span></div>
<div style="position:absolute;top:394.34px;left:220.38px;font:normal 400 18.5px/18.5px 'Liberation Sans',sans-serif;color:#44546a;letter-spacing:0px;-webkit-text-stroke:0.3px #44546a;"><span id="t44" style="display:inline-block;white-space:nowrap;transform:scaleX(1.0164);transform-origin:left 0;">Project Title Here</span></div>
<div style="position:absolute;top:428.14px;left:78.01px;font:normal 400 18.5px/18.5px 'Liberation Sans',sans-serif;color:#767676;letter-spacing:0px;-webkit-text-stroke:0.3px #767676;"><span id="t45" style="display:inline-block;white-space:nowrap;transform:scaleX(0.9938);transform-origin:left 0;">Number</span></div>
<div style="position:absolute;top:427.34px;left:222.26px;font:normal 400 18.5px/18.5px 'Liberation Sans',sans-serif;color:#44546a;letter-spacing:0px;-webkit-text-stroke:0.3px #44546a;"><span id="t46" style="display:inline-block;white-space:nowrap;transform:scaleX(0.8071);transform-origin:left 0;">#123</span></div>
<div style="position:absolute;top:461.14px;left:78.00px;font:normal 400 18.5px/18.5px 'Liberation Sans',sans-serif;color:#767676;letter-spacing:0px;-webkit-text-stroke:0.3px #767676;"><span id="t47" style="display:inline-block;white-space:nowrap;">Developers</span></div>
<div style="position:absolute;top:460.34px;left:220.41px;font:normal 400 18.5px/18.5px 'Liberation Sans',sans-serif;color:#44546a;letter-spacing:0px;-webkit-text-stroke:0.3px #44546a;"><span id="t48" style="display:inline-block;white-space:nowrap;transform:scaleX(0.9961);transform-origin:left 0;">Names of the Developers</span></div>
<div style="position:absolute;top:355.04px;left:745.61px;font:normal 400 18.5px/18.5px 'Liberation Sans',sans-serif;color:#767676;letter-spacing:0px;-webkit-text-stroke:0.3px #767676;"><span id="t49" style="display:inline-block;white-space:nowrap;transform:scaleX(0.9941);transform-origin:left 0;">Project Type</span></div>
<div style="position:absolute;top:355.04px;left:899.81px;font:normal 400 18.5px/18.5px 'Liberation Sans',sans-serif;color:#44546a;letter-spacing:0px;-webkit-text-stroke:0.3px #44546a;"><span id="t50" style="display:inline-block;white-space:nowrap;transform:scaleX(0.9901);transform-origin:left 0;">Project Type</span></div>
<div style="position:absolute;top:395.14px;left:746.00px;font:normal 400 18.5px/18.5px 'Liberation Sans',sans-serif;color:#767676;letter-spacing:0px;-webkit-text-stroke:0.3px #767676;"><span id="t51" style="display:inline-block;white-space:nowrap;">Start Date</span></div>
<div style="position:absolute;top:395.14px;left:900.81px;font:normal 400 18.5px/18.5px 'Liberation Sans',sans-serif;color:#44546a;letter-spacing:0px;-webkit-text-stroke:0.3px #44546a;"><span id="t52" style="display:inline-block;white-space:nowrap;transform:scaleX(0.8851);transform-origin:left 0;">22-10-19</span></div>
<div style="position:absolute;top:428.14px;left:745.05px;font:normal 400 18.5px/18.5px 'Liberation Sans',sans-serif;color:#767676;letter-spacing:0px;-webkit-text-stroke:0.3px #767676;"><span id="t53" style="display:inline-block;white-space:nowrap;transform:scaleX(0.9671);transform-origin:left 0;">Due Date</span></div>
<div style="position:absolute;top:461.14px;left:745.04px;font:normal 400 18.5px/18.5px 'Liberation Sans',sans-serif;color:#767676;letter-spacing:0px;-webkit-text-stroke:0.3px #767676;"><span id="t54" style="display:inline-block;white-space:nowrap;transform:scaleX(0.9747);transform-origin:left 0;">End Date</span></div>
<div style="position:absolute;top:461.14px;left:900.81px;font:normal 400 18.5px/18.5px 'Liberation Sans',sans-serif;color:#44546a;letter-spacing:0px;-webkit-text-stroke:0.3px #44546a;"><span id="t55" style="display:inline-block;white-space:nowrap;transform:scaleX(0.8851);transform-origin:left 0;">22-10-19</span></div>
<div style="position:absolute;top:530.94px;left:69.37px;font:normal 700 27px/27px 'Liberation Sans',sans-serif;color:#ffffff;letter-spacing:0px;"><span id="t56" style="display:inline-block;white-space:nowrap;transform:scaleX(1.0337);transform-origin:left 0;">Quality Checking Team</span></div>
<div style="position:absolute;top:573.14px;left:77.80px;font:normal 400 18.5px/18.5px 'Liberation Sans',sans-serif;color:#767676;letter-spacing:0px;-webkit-text-stroke:0.3px #767676;"><span id="t57" style="display:inline-block;white-space:nowrap;transform:scaleX(1.0031);transform-origin:left 0;">Department</span></div>
<div style="position:absolute;top:572.34px;left:221.61px;font:normal 400 18.5px/18.5px 'Liberation Sans',sans-serif;color:#44546a;letter-spacing:0px;-webkit-text-stroke:0.3px #44546a;"><span id="t58" style="display:inline-block;white-space:nowrap;transform:scaleX(0.9569);transform-origin:left 0;">QA Team Name</span></div>
<div style="position:absolute;top:606.14px;left:77.83px;font:normal 400 18.5px/18.5px 'Liberation Sans',sans-serif;color:#767676;letter-spacing:0px;-webkit-text-stroke:0.3px #767676;"><span id="t59" style="display:inline-block;white-space:nowrap;transform:scaleX(0.9819);transform-origin:left 0;">Manager</span></div>
<div style="position:absolute;top:605.34px;left:220.60px;font:normal 400 18.5px/18.5px 'Liberation Sans',sans-serif;color:#44546a;letter-spacing:0px;-webkit-text-stroke:0.3px #44546a;"><span id="t60" style="display:inline-block;white-space:nowrap;">Name of the Tester</span></div>
<div style="position:absolute;top:639.14px;left:79.80px;font:normal 400 18.5px/18.5px 'Liberation Sans',sans-serif;color:#767676;letter-spacing:0px;-webkit-text-stroke:0.3px #767676;"><span id="t61" style="display:inline-block;white-space:nowrap;transform:scaleX(1.0067);transform-origin:left 0;">Testers</span></div>
<div style="position:absolute;top:638.34px;left:220.59px;font:normal 400 18.5px/18.5px 'Liberation Sans',sans-serif;color:#44546a;letter-spacing:0px;-webkit-text-stroke:0.3px #44546a;"><span id="t62" style="display:inline-block;white-space:nowrap;transform:scaleX(1.0058);transform-origin:left 0;">Names of the Testers</span></div>
<div style="position:absolute;top:533.14px;left:746.59px;font:normal 400 18.5px/18.5px 'Liberation Sans',sans-serif;color:#767676;letter-spacing:0px;-webkit-text-stroke:0.3px #767676;"><span id="t63" style="display:inline-block;white-space:nowrap;transform:scaleX(0.9800);transform-origin:left 0;">Testing Method</span></div>
<div style="position:absolute;top:533.14px;left:899.01px;font:normal 400 18.5px/18.5px 'Liberation Sans',sans-serif;color:#44546a;letter-spacing:0px;-webkit-text-stroke:0.3px #44546a;"><span id="t64" style="display:inline-block;white-space:nowrap;transform:scaleX(0.9926);transform-origin:left 0;">Name of the Developer</span></div>
<div style="position:absolute;top:573.14px;left:745.63px;font:normal 400 18.5px/18.5px 'Liberation Sans',sans-serif;color:#767676;letter-spacing:0px;-webkit-text-stroke:0.3px #767676;"><span id="t65" style="display:inline-block;white-space:nowrap;transform:scaleX(0.9609);transform-origin:left 0;">QC Start Date</span></div>
<div style="position:absolute;top:573.14px;left:899.00px;font:normal 400 18.5px/18.5px 'Liberation Sans',sans-serif;color:#44546a;letter-spacing:0px;-webkit-text-stroke:0.3px #44546a;"><span id="t66" style="display:inline-block;white-space:nowrap;">Project Type</span></div>
<div style="position:absolute;top:606.14px;left:745.65px;font:normal 400 18.5px/18.5px 'Liberation Sans',sans-serif;color:#767676;letter-spacing:0px;-webkit-text-stroke:0.3px #767676;"><span id="t67" style="display:inline-block;white-space:nowrap;transform:scaleX(0.9236);transform-origin:left 0;">QC Due Date</span></div>
<div style="position:absolute;top:606.14px;left:900.05px;font:normal 400 18.5px/18.5px 'Liberation Sans',sans-serif;color:#44546a;letter-spacing:0px;-webkit-text-stroke:0.3px #44546a;"><span id="t68" style="display:inline-block;white-space:nowrap;transform:scaleX(0.9082);transform-origin:left 0;">22-10-19</span></div>
<div style="position:absolute;top:639.14px;left:745.65px;font:normal 400 18.5px/18.5px 'Liberation Sans',sans-serif;color:#767676;letter-spacing:0px;-webkit-text-stroke:0.3px #767676;"><span id="t69" style="display:inline-block;white-space:nowrap;transform:scaleX(0.9248);transform-origin:left 0;">QC End Date</span></div>
<div style="position:absolute;top:639.14px;left:900.05px;font:normal 400 18.5px/18.5px 'Liberation Sans',sans-serif;color:#44546a;letter-spacing:0px;-webkit-text-stroke:0.3px #44546a;"><span id="t70" style="display:inline-block;white-space:nowrap;transform:scaleX(0.9082);transform-origin:left 0;">22-10-19</span></div>
<div style="position:absolute;top:721.76px;left:135.46px;width:0;display:flex;justify-content:center;font:normal 700 18px/18px 'Liberation Sans',sans-serif;color:#ffffff;letter-spacing:0px;"><span id="t71" style="display:inline-block;white-space:nowrap;transform:scaleX(0.9156);transform-origin:center 0;">S.No.</span></div>
<div style="position:absolute;top:719.45px;left:210.48px;font:normal 700 22.5px/22.5px 'Liberation Sans',sans-serif;color:#ffffff;letter-spacing:0px;"><span id="t72" style="display:inline-block;white-space:nowrap;transform:scaleX(0.9000);transform-origin:left 0;">Section 1</span></div>
<div style="position:absolute;top:719.35px;left:349.24px;font:normal 700 22.5px/22.5px 'Liberation Sans',sans-serif;color:#ffffff;letter-spacing:0px;"><span id="t73" style="display:inline-block;white-space:nowrap;transform:scaleX(0.9545);transform-origin:left 0;">Checklist [Points to be tested]</span></div>
<div style="position:absolute;top:721.76px;left:808.08px;width:0;display:flex;justify-content:center;font:normal 700 18px/18px 'Liberation Sans',sans-serif;color:#ffffff;letter-spacing:0px;"><span id="t74" style="display:inline-block;white-space:nowrap;transform:scaleX(0.9194);transform-origin:center 0;">Tested?</span></div>
<div style="position:absolute;top:719.75px;left:901.03px;font:normal 700 22.5px/22.5px 'Liberation Sans',sans-serif;color:#ffffff;letter-spacing:0px;"><span id="t75" style="display:inline-block;white-space:nowrap;transform:scaleX(0.9725);transform-origin:left 0;">Remarks/Findings</span></div>
<div style="position:absolute;top:772.26px;left:135.00px;width:0;display:flex;justify-content:center;font:normal 400 16px/16px 'Liberation Sans',sans-serif;color:#17808a;letter-spacing:0px;"><span id="t76" style="display:inline-block;white-space:nowrap;">1</span></div>
<div style="position:absolute;top:771.76px;left:807.62px;width:0;display:flex;justify-content:center;font:normal 400 16px/16px 'Liberation Sans',sans-serif;color:#262626;letter-spacing:0px;"><span id="t77" style="display:inline-block;white-space:nowrap;transform:scaleX(0.9115);transform-origin:center 0;">Yes</span></div>
<div style="position:absolute;top:805.26px;left:135.00px;width:0;display:flex;justify-content:center;font:normal 400 16px/16px 'Liberation Sans',sans-serif;color:#17808a;letter-spacing:0px;"><span id="t78" style="display:inline-block;white-space:nowrap;">2</span></div>
<div style="position:absolute;top:804.76px;left:807.62px;width:0;display:flex;justify-content:center;font:normal 400 16px/16px 'Liberation Sans',sans-serif;color:#262626;letter-spacing:0px;"><span id="t79" style="display:inline-block;white-space:nowrap;transform:scaleX(0.9115);transform-origin:center 0;">Yes</span></div>
<div style="position:absolute;top:838.26px;left:135.00px;width:0;display:flex;justify-content:center;font:normal 400 16px/16px 'Liberation Sans',sans-serif;color:#17808a;letter-spacing:0px;"><span id="t80" style="display:inline-block;white-space:nowrap;">3</span></div>
<div style="position:absolute;top:837.76px;left:807.62px;width:0;display:flex;justify-content:center;font:normal 400 16px/16px 'Liberation Sans',sans-serif;color:#262626;letter-spacing:0px;"><span id="t81" style="display:inline-block;white-space:nowrap;transform:scaleX(0.9115);transform-origin:center 0;">Yes</span></div>
<div style="position:absolute;top:871.26px;left:135.00px;width:0;display:flex;justify-content:center;font:normal 400 16px/16px 'Liberation Sans',sans-serif;color:#17808a;letter-spacing:0px;"><span id="t82" style="display:inline-block;white-space:nowrap;">4</span></div>
<div style="position:absolute;top:870.76px;left:807.62px;width:0;display:flex;justify-content:center;font:normal 400 16px/16px 'Liberation Sans',sans-serif;color:#262626;letter-spacing:0px;"><span id="t83" style="display:inline-block;white-space:nowrap;transform:scaleX(0.9115);transform-origin:center 0;">Yes</span></div>
<div style="position:absolute;top:772.26px;left:221.20px;font:italic 400 16px/16px 'Liberation Sans',sans-serif;color:#595959;letter-spacing:0px;"><span id="t84" style="display:inline-block;white-space:nowrap;transform:scaleX(0.9913);transform-origin:left 0;">Check if there are any spelling issues</span></div>
<div style="position:absolute;top:771.76px;left:900.40px;font:italic 400 16px/16px 'Liberation Sans',sans-serif;color:#595959;letter-spacing:0px;"><span id="t85" style="display:inline-block;white-space:nowrap;transform:scaleX(1.0116);transform-origin:left 0;">Issues in BWX module, correct the title.</span></div>
<div style="position:absolute;top:910.21px;left:146.00px;font:normal 400 17px/17px 'Liberation Sans',sans-serif;color:#1b1b1b;letter-spacing:0px;"><span id="t86" style="display:inline-block;white-space:nowrap;transform:scaleX(0.9980);transform-origin:left 0;">QC Checklist</span></div>
<div style="position:absolute;top:949.07px;left:8.65px;font:normal 400 13.5px/13.5px 'Liberation Sans',sans-serif;color:#e6e6e6;letter-spacing:0px;"><span id="t87" style="display:inline-block;white-space:nowrap;transform:scaleX(0.9289);transform-origin:left 0;">Ready</span></div>
<div style="position:absolute;top:948.87px;left:92.84px;font:normal 700 13.5px/13.5px 'Liberation Sans',sans-serif;color:#f2f2f2;letter-spacing:0px;"><span id="t88" style="display:inline-block;white-space:nowrap;transform:scaleX(0.9398);transform-origin:left 0;">Accessibility: Investigate</span></div>
<div style="position:absolute;top:949.37px;left:1872.00px;font:normal 400 13.5px/13.5px 'Liberation Sans',sans-serif;color:#e6e6e6;letter-spacing:0px;"><span id="t89" style="display:inline-block;white-space:nowrap;">100</span></div>
<div style="position:absolute;top:101.76px;left:28.72px;font:normal 400 14.7px/14.7px 'Liberation Sans',sans-serif;color:#262626;letter-spacing:0px;"><span id="t90" style="display:inline-block;white-space:nowrap;transform:scaleX(0.9000);transform-origin:left 0;">Paste</span></div>
<div style="position:absolute;top:59.46px;left:104.00px;font:normal 400 14.7px/14.7px 'Liberation Sans',sans-serif;color:#262626;letter-spacing:0px;"><span id="t91" style="display:inline-block;white-space:nowrap;">Cut</span></div>
<div style="position:absolute;top:90.56px;left:104.00px;font:normal 400 14.7px/14.7px 'Liberation Sans',sans-serif;color:#262626;letter-spacing:0px;"><span id="t92" style="display:inline-block;white-space:nowrap;">Copy</span></div>
<div style="position:absolute;top:122.96px;left:104.01px;font:normal 400 14.7px/14.7px 'Liberation Sans',sans-serif;color:#262626;letter-spacing:0px;"><span id="t93" style="display:inline-block;white-space:nowrap;transform:scaleX(0.9814);transform-origin:left 0;">Format Painter</span></div>
<div style="position:absolute;top:151.24px;left:75.99px;font:normal 400 13.3px/13.3px 'Liberation Sans',sans-serif;color:#262626;letter-spacing:0px;"><span id="t94" style="display:inline-block;white-space:nowrap;transform:scaleX(1.0196);transform-origin:left 0;">Clipboard</span></div>
<div style="position:absolute;top:69.16px;left:234.80px;font:normal 400 14.7px/14.7px 'Liberation Sans',sans-serif;color:#262626;letter-spacing:0px;"><span id="t95" style="display:inline-block;white-space:nowrap;">Bahnschrift</span></div>
<div style="position:absolute;top:69.16px;left:380.00px;font:normal 400 14.7px/14.7px 'Liberation Sans',sans-serif;color:#262626;letter-spacing:0px;"><span id="t96" style="display:inline-block;white-space:nowrap;">11</span></div>
<div style="position:absolute;top:150.84px;left:344.00px;font:normal 400 13.3px/13.3px 'Liberation Sans',sans-serif;color:#262626;letter-spacing:0px;"><span id="t97" style="display:inline-block;white-space:nowrap;">Font</span></div>
<div style="position:absolute;top:69.56px;left:731.00px;font:normal 400 14.7px/14.7px 'Liberation Sans',sans-serif;color:#262626;letter-spacing:0px;"><span id="t98" style="display:inline-block;white-space:nowrap;">Wrap Text</span></div>
<div style="position:absolute;top:109.06px;left:729.99px;font:normal 400 14.7px/14.7px 'Liberation Sans',sans-serif;color:#262626;letter-spacing:0px;"><span id="t99" style="display:inline-block;white-space:nowrap;transform:scaleX(1.0223);transform-origin:left 0;">Merge & Center</span></div>
<div style="position:absolute;top:151.04px;left:661.40px;font:normal 400 13.3px/13.3px 'Liberation Sans',sans-serif;color:#262626;letter-spacing:0px;"><span id="t100" style="display:inline-block;white-space:nowrap;transform:scaleX(0.9780);transform-origin:left 0;">Alignment</span></div>
<div style="position:absolute;top:69.16px;left:900.80px;font:normal 400 14.7px/14.7px 'Liberation Sans',sans-serif;color:#262626;letter-spacing:0px;"><span id="t101" style="display:inline-block;white-space:nowrap;">General</span></div>
<div style="position:absolute;top:150.94px;left:952.80px;font:normal 400 13.3px/13.3px 'Liberation Sans',sans-serif;color:#262626;letter-spacing:0px;"><span id="t102" style="display:inline-block;white-space:nowrap;transform:scaleX(1.0043);transform-origin:left 0;">Number</span></div>
<div style="position:absolute;top:99.96px;left:1144.00px;width:0;display:flex;justify-content:center;font:normal 400 14.7px/14.7px 'Liberation Sans',sans-serif;color:#262626;letter-spacing:0px;"><span id="t103" style="display:inline-block;white-space:nowrap;transform:scaleX(1.0597);transform-origin:center 0;">Conditional</span></div>
<div style="position:absolute;top:119.76px;left:1137.50px;width:0;display:flex;justify-content:center;font:normal 400 14.7px/14.7px 'Liberation Sans',sans-serif;color:#262626;letter-spacing:0px;"><span id="t104" style="display:inline-block;white-space:nowrap;">Formatting</span></div>
<div style="position:absolute;top:99.96px;left:1228.70px;width:0;display:flex;justify-content:center;font:normal 400 14.7px/14.7px 'Liberation Sans',sans-serif;color:#262626;letter-spacing:0px;"><span id="t105" style="display:inline-block;white-space:nowrap;transform:scaleX(0.9938);transform-origin:center 0;">Format as</span></div>
<div style="position:absolute;top:119.76px;left:1221.00px;width:0;display:flex;justify-content:center;font:normal 400 14.7px/14.7px 'Liberation Sans',sans-serif;color:#262626;letter-spacing:0px;"><span id="t106" style="display:inline-block;white-space:nowrap;">Table</span></div>
<div style="position:absolute;top:99.96px;left:1296.00px;width:0;display:flex;justify-content:center;font:normal 400 14.7px/14.7px 'Liberation Sans',sans-serif;color:#262626;letter-spacing:0px;"><span id="t107" style="display:inline-block;white-space:nowrap;">Cell</span></div>
<div style="position:absolute;top:119.76px;left:1286.50px;width:0;display:flex;justify-content:center;font:normal 400 14.7px/14.7px 'Liberation Sans',sans-serif;color:#262626;letter-spacing:0px;"><span id="t108" style="display:inline-block;white-space:nowrap;">Styles</span></div>
<div style="position:absolute;top:152.04px;left:1208.50px;width:0;display:flex;justify-content:center;font:normal 400 13.3px/13.3px 'Liberation Sans',sans-serif;color:#262626;letter-spacing:0px;"><span id="t109" style="display:inline-block;white-space:nowrap;">Styles</span></div>
<div style="position:absolute;top:101.76px;left:1369.41px;width:0;display:flex;justify-content:center;font:normal 400 14.7px/14.7px 'Liberation Sans',sans-serif;color:#262626;letter-spacing:0px;"><span id="t110" style="display:inline-block;white-space:nowrap;transform:scaleX(0.9861);transform-origin:center 0;">Insert</span></div>
<div style="position:absolute;top:101.76px;left:1423.89px;width:0;display:flex;justify-content:center;font:normal 400 14.7px/14.7px 'Liberation Sans',sans-serif;color:#262626;letter-spacing:0px;"><span id="t111" style="display:inline-block;white-space:nowrap;transform:scaleX(1.0463);transform-origin:center 0;">Delete</span></div>
<div style="position:absolute;top:100.06px;left:1478.40px;width:0;display:flex;justify-content:center;font:normal 400 14.7px/14.7px 'Liberation Sans',sans-serif;color:#262626;letter-spacing:0px;"><span id="t112" style="display:inline-block;white-space:nowrap;transform:scaleX(1.0130);transform-origin:center 0;">Format</span></div>
<div style="position:absolute;top:151.94px;left:1423.70px;width:0;display:flex;justify-content:center;font:normal 400 13.3px/13.3px 'Liberation Sans',sans-serif;color:#262626;letter-spacing:0px;"><span id="t113" style="display:inline-block;white-space:nowrap;">Cells</span></div>
<div style="position:absolute;top:59.26px;left:1556.20px;font:normal 400 14.7px/14.7px 'Liberation Sans',sans-serif;color:#262626;letter-spacing:0px;"><span id="t114" style="display:inline-block;white-space:nowrap;transform:scaleX(0.9967);transform-origin:left 0;">AutoSum</span></div>
<div style="position:absolute;top:90.86px;left:1555.20px;font:normal 400 14.7px/14.7px 'Liberation Sans',sans-serif;color:#262626;letter-spacing:0px;"><span id="t115" style="display:inline-block;white-space:nowrap;">Fill</span></div>
<div style="position:absolute;top:122.66px;left:1555.20px;font:normal 400 14.7px/14.7px 'Liberation Sans',sans-serif;color:#262626;letter-spacing:0px;"><span id="t116" style="display:inline-block;white-space:nowrap;">Clear</span></div>
<div style="position:absolute;top:151.94px;left:1648.50px;width:0;display:flex;justify-content:center;font:normal 400 13.3px/13.3px 'Liberation Sans',sans-serif;color:#262626;letter-spacing:0px;"><span id="t117" style="display:inline-block;white-space:nowrap;">Editing</span></div>
<div style="position:absolute;top:99.66px;left:1685.97px;width:0;display:flex;justify-content:center;font:normal 400 14.7px/14.7px 'Liberation Sans',sans-serif;color:#262626;letter-spacing:0px;"><span id="t118" style="display:inline-block;white-space:nowrap;transform:scaleX(1.0550);transform-origin:center 0;">Sort &</span></div>
<div style="position:absolute;top:119.66px;left:1679.00px;width:0;display:flex;justify-content:center;font:normal 400 14.7px/14.7px 'Liberation Sans',sans-serif;color:#262626;letter-spacing:0px;"><span id="t119" style="display:inline-block;white-space:nowrap;">Filter</span></div>
<div style="position:absolute;top:99.66px;left:1744.47px;width:0;display:flex;justify-content:center;font:normal 400 14.7px/14.7px 'Liberation Sans',sans-serif;color:#262626;letter-spacing:0px;"><span id="t120" style="display:inline-block;white-space:nowrap;transform:scaleX(1.0659);transform-origin:center 0;">Find &</span></div>
<div style="position:absolute;top:119.66px;left:1737.50px;width:0;display:flex;justify-content:center;font:normal 400 14.7px/14.7px 'Liberation Sans',sans-serif;color:#262626;letter-spacing:0px;"><span id="t121" style="display:inline-block;white-space:nowrap;">Select</span></div>
<div style="position:absolute;top:99.36px;left:1824.41px;width:0;display:flex;justify-content:center;font:normal 400 14.7px/14.7px 'Liberation Sans',sans-serif;color:#262626;letter-spacing:0px;"><span id="t122" style="display:inline-block;white-space:nowrap;transform:scaleX(1.0320);transform-origin:center 0;">Add-ins</span></div>
<div style="position:absolute;top:151.54px;left:1822.30px;width:0;display:flex;justify-content:center;font:normal 400 13.3px/13.3px 'Liberation Sans',sans-serif;color:#262626;letter-spacing:0px;"><span id="t123" style="display:inline-block;white-space:nowrap;transform:scaleX(0.9711);transform-origin:center 0;">Add-ins</span></div>
</body></html>
